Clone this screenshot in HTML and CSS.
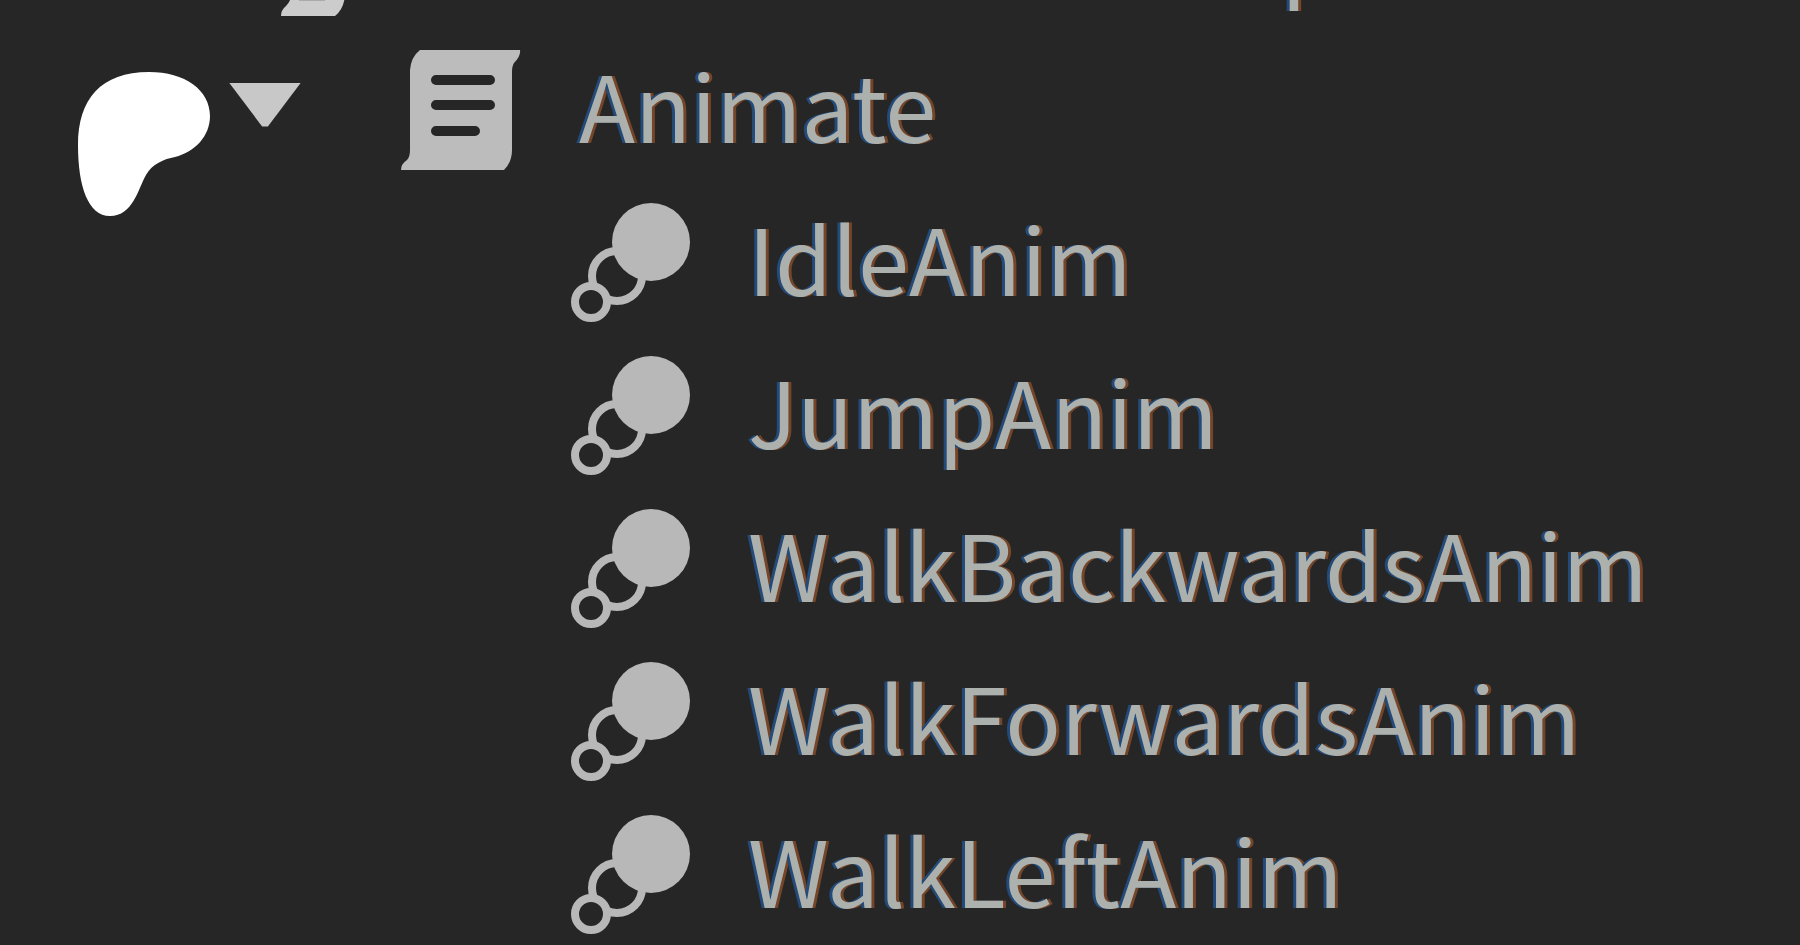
FILE: index.html
```
<!DOCTYPE html>
<html lang="en">
<head>
	<meta charset="utf-8">
	<title>Explorer</title>
	<link rel="stylesheet" href="styles.css">
</head>
<body>
	<!-- shared icons -->
	<svg class="icon_defs" aria-hidden="true">
		<symbol id="icon_folder_script" viewBox="0 0 120 120">
			<path fill="#cccccc" d="M60 60 H114 V98 Q113 112 104 119 H50 Q50 113 55 109 Q60 104 60 98 Z"/>
			<path fill="#aaaaaa" d="M68 101 H94 V104 H68 Z"/>
		</symbol>
		<symbol id="icon_script" viewBox="0 0 120 120">
			<path fill="#bcbcbc" fill-rule="evenodd" d="M19 0 H119 Q120 6 113 13 Q111 16 111 22 V100 Q111 112 103 120 H0 Q0 114 6 110 Q9 107 9 100 V20 Q10 7 19 0 Z M35 25 a5 5 0 0 0 0 10 H89 a5 5 0 0 0 0 -10 Z M35 50 a5 5 0 0 0 0 10 H89 a5 5 0 0 0 0 -10 Z M35 76 a5 5 0 0 0 0 10 H74 a5 5 0 0 0 0 -10 Z"/>
		</symbol>
		<symbol id="icon_anim" viewBox="0 0 120 120">
			<g fill="#262626" stroke="#b8b8b8" stroke-width="8">
				<circle cx="47" cy="73" r="25"/>
				<circle cx="21" cy="99" r="16"/>
			</g>
			<circle fill="#b8b8b8" cx="81" cy="39" r="39"/>
		</symbol>
	</svg>

	<ul class="tree">
		<li>
			<div class="row level_1">
				<svg class="icon"><use href="#icon_folder_script"/></svg>
				<span class="name">StarterCharacterScripts</span>
			</div>
			<ul>
				<li>
					<div class="row level_2">
						<button class="toggle" type="button" aria-expanded="true" aria-label="Collapse Animate"></button>
						<svg class="icon"><use href="#icon_script"/></svg>
						<span class="name">Animate</span>
					</div>
					<ul>
						<li class="row level_3"><svg class="icon"><use href="#icon_anim"/></svg><span class="name">IdleAnim</span></li>
						<li class="row level_3"><svg class="icon"><use href="#icon_anim"/></svg><span class="name">JumpAnim</span></li>
						<li class="row level_3"><svg class="icon"><use href="#icon_anim"/></svg><span class="name">WalkBackwardsAnim</span></li>
						<li class="row level_3"><svg class="icon"><use href="#icon_anim"/></svg><span class="name">WalkForwardsAnim</span></li>
						<li class="row level_3"><svg class="icon"><use href="#icon_anim"/></svg><span class="name">WalkLeftAnim</span></li>
					</ul>
				</li>
			</ul>
		</li>
	</ul>

	<svg class="blob" viewBox="0 0 132 144" aria-hidden="true">
		<path fill="#ffffff" d="M71 0 C107 0 132 18 132 44 C132 64 117 80 97 85 C86 87 74 92 68 103 C60 117 55 144 32 144 C10 144 0 114 0 73 C0 27 23 0 71 0 Z"/>
	</svg>
</body>
</html>
```
FILE: styles.css
```
body {
	margin: 0;
	height: 100vh;
	overflow: hidden;
	background-color: #262626;
	color: #adb1ad;
	font-family: "Noto Sans CJK SC", "Open Sans", sans-serif;
	font-size: 92px;
}

ul {
	margin: 0;
	padding: 0;
	list-style: none;
}

/* scrolled part way past the first row */
.tree {
	margin-top: -120px;
}

.row {
	display: flex;
	align-items: center;
	height: 153px;
	line-height: 153px;
	white-space: nowrap;
}

.level_1 { padding-left: 231px; }
.level_2 { padding-left: 229px; }
.level_3 { padding-left: 570px; }

.icon {
	flex: none;
	width: 120px;
	height: 120px;
}

.icon_defs {
	position: absolute;
	width: 0;
	height: 0;
}

.toggle {
	width: 72px;
	height: 44px;
	margin: 0 100px 10px 0;
	padding: 0;
	border: 0;
	background-color: #c8c8c8;
	clip-path: polygon(0 0, 100% 0, 54% 100%, 46% 100%);
}

/* coloured edges of the lettering */
.name {
	margin: 0 0 14px 58px;
	text-shadow: -3px 0 #234a78, 3px 0 #744528;
}

.blob {
	position: absolute;
	top: 72px;
	left: 78px;
	width: 132px;
	height: 144px;
}
```
